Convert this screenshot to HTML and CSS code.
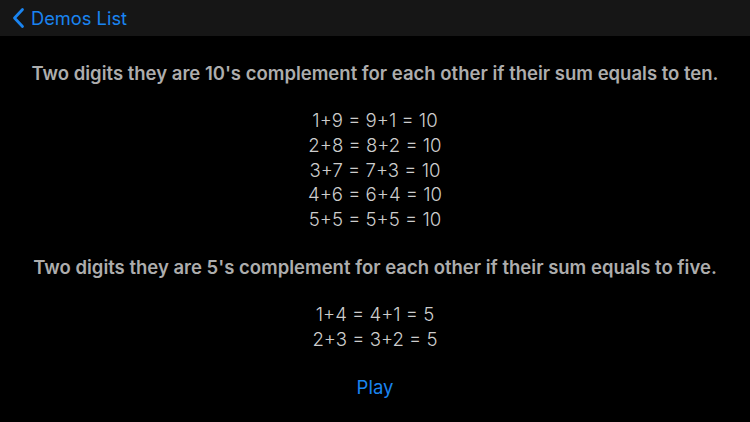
FILE: index.html
```html
<!DOCTYPE html>
<html>
<head>
<meta charset="utf-8">
<link rel="stylesheet" href="styles.css">
</head>
<body>
<div class="nav">
  <div class="back">
    <svg class="chev" width="13" height="22" viewBox="0 0 13 22"><path d="M10.5 2.5 L2.5 11 L10.5 19.5" fill="none" stroke="#1a84f0" stroke-width="2.8" stroke-linecap="round" stroke-linejoin="round"/></svg>
    <span class="back-text">Demos List</span>
  </div>
</div>
<div class="content">
  <p class="heading">Two digits they are 10's complement for each other if their sum equals to ten.</p>
  <div class="eqs">
    <div>1+9 = 9+1 = 10</div>
    <div>2+8 = 8+2 = 10</div>
    <div>3+7 = 7+3 = 10</div>
    <div>4+6 = 6+4 = 10</div>
    <div>5+5 = 5+5 = 10</div>
  </div>
  <p class="heading h2">Two digits they are 5's complement for each other if their sum equals to five.</p>
  <div class="eqs">
    <div>1+4 = 4+1 = 5</div>
    <div>2+3 = 3+2 = 5</div>
  </div>
  <div class="play">Play</div>
</div>
</body>
</html>
```
FILE: styles.css
```css
html, body {
  margin: 0;
  padding: 0;
  background: #000;
  width: 750px;
  height: 422px;
  overflow: hidden;
  font-family: Inter, "Noto Sans", sans-serif;
}
.nav {
  height: 36px;
  background: #161616;
  display: flex;
  align-items: center;
  padding-left: 12px;
  box-sizing: border-box;
}
.back {
  display: flex;
  align-items: center;
  gap: 6px;
}
.chev { display: block; }
.back-text {
  color: #1a84f0;
  font-size: 18.3px;
}
.content {
  display: flex;
  flex-direction: column;
  align-items: center;
  text-align: center;
}
.heading {
  margin: 26px 0 0 0;
  color: #adadad;
  font-size: 18.5px;
  font-weight: 600;
  line-height: 23px;
  white-space: nowrap;
}
.h2 { margin-top: 24px; }
.eqs {
  margin-top: 23px;
  color: #cdcdcd;
  font-size: 18.6px;
  font-weight: 300;
  line-height: 24.8px;
}
.eqs + .play { margin-top: 23px; }
.play {
  color: #1a84f0;
  font-size: 18.5px;
  line-height: 24px;
}
```
